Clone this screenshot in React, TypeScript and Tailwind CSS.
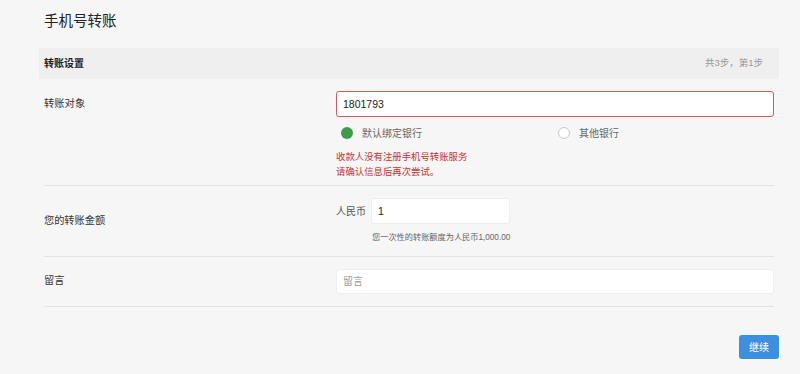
import { useState } from "react"

export default function App() {
  const [target, setTarget] = useState("1801793")
  const [amount, setAmount] = useState("1")
  const [bank, setBank] = useState("default")

  return (
    <div className="min-h-screen bg-[#f6f6f6] pl-[39px] pr-[21px] font-['Liberation_Sans','Noto_Sans_CJK_SC',sans-serif] text-[#333]">
      <h1 className="pl-[5px] pt-[10px] text-[14.5px] leading-[22px] text-[#222]">手机号转账</h1>

      <div className="mt-[16px] flex h-[31px] items-center justify-between bg-[#efefef] pl-[5px] pr-[16px]">
        <span className="text-[10px] font-bold text-[#222]">转账设置</span>
        <span className="text-[9.5px] text-[#999]">共3步，第1步</span>
      </div>

      <div className="px-[5px]">
        {/* 转账对象 */}
        <div className="flex border-b border-[#e3e3e3] pb-[6px] pt-[12px]">
          <div className="flex h-[26px] w-[292px] items-center text-[10.3px]">转账对象</div>
          <div className="flex-1">
            <input
              value={target}
              onChange={(e) => setTarget(e.target.value)}
              className="h-[26px] w-full rounded-[3px] border border-[#d9575a] bg-white px-[6px] text-[10.5px] text-[#222] outline-none"
            />
            <div className="mt-[8px] flex h-[16px] items-center text-[10px] text-[#666]">
              <label className="flex w-[222px] items-center pl-[5px]" onClick={() => setBank("default")}>
                <span
                  className={`h-[12px] w-[12px] rounded-full ${
                    bank === "default" ? "bg-[#3d9c4a]" : "border border-[#c8c8c8] bg-white"
                  }`}
                />
                <span className="ml-[9px]">默认绑定银行</span>
              </label>
              <label className="flex items-center" onClick={() => setBank("other")}>
                <span
                  className={`h-[12px] w-[12px] rounded-full ${
                    bank === "other" ? "bg-[#3d9c4a]" : "border border-[#c8c8c8] bg-white"
                  }`}
                />
                <span className="ml-[9px]">其他银行</span>
              </label>
            </div>
            <div className="mt-[8px] text-[9.4px] leading-[15px] text-[#c9302c]">
              <p>收款人没有注册手机号转账服务</p>
              <p>请确认信息后再次尝试。</p>
            </div>
          </div>
        </div>

        {/* 您的转账金额 */}
        <div className="flex items-center border-b border-[#e3e3e3] pb-[12px] pt-[12px]">
          <div className="w-[292px] text-[10.2px]">您的转账金额</div>
          <div className="flex-1">
            <div className="flex items-center">
              <span className="w-[35px] text-[10px] text-[#555]">人民币</span>
              <input
                value={amount}
                onChange={(e) => setAmount(e.target.value)}
                className="h-[26px] w-[139px] rounded-[3px] border border-[#eeeeee] bg-white px-[6px] text-[10.5px] text-[#222] outline-none"
              />
            </div>
            <div className="ml-[36px] mt-[8px] text-[8.2px] leading-[12px] text-[#666]">您一次性的转账额度为人民币1,000.00</div>
          </div>
        </div>

        {/* 留言 */}
        <div className="flex items-center border-b border-[#e3e3e3] pb-[12px] pt-[11px]">
          <div className="w-[292px] text-[10.2px]">留言</div>
          <div className="flex-1">
            <input
              placeholder="留言"
              className="h-[25px] w-full rounded-[3px] border border-[#eeeeee] bg-white px-[6px] text-[10px] text-[#222] outline-none placeholder:text-[#999]"
            />
          </div>
        </div>
      </div>

      <div className="mt-[28px] flex justify-end">
        <button className="h-[24px] w-[40px] rounded-[3px] bg-[#3d8fe0] text-[10px] text-white">继续</button>
      </div>
    </div>
  )
}
